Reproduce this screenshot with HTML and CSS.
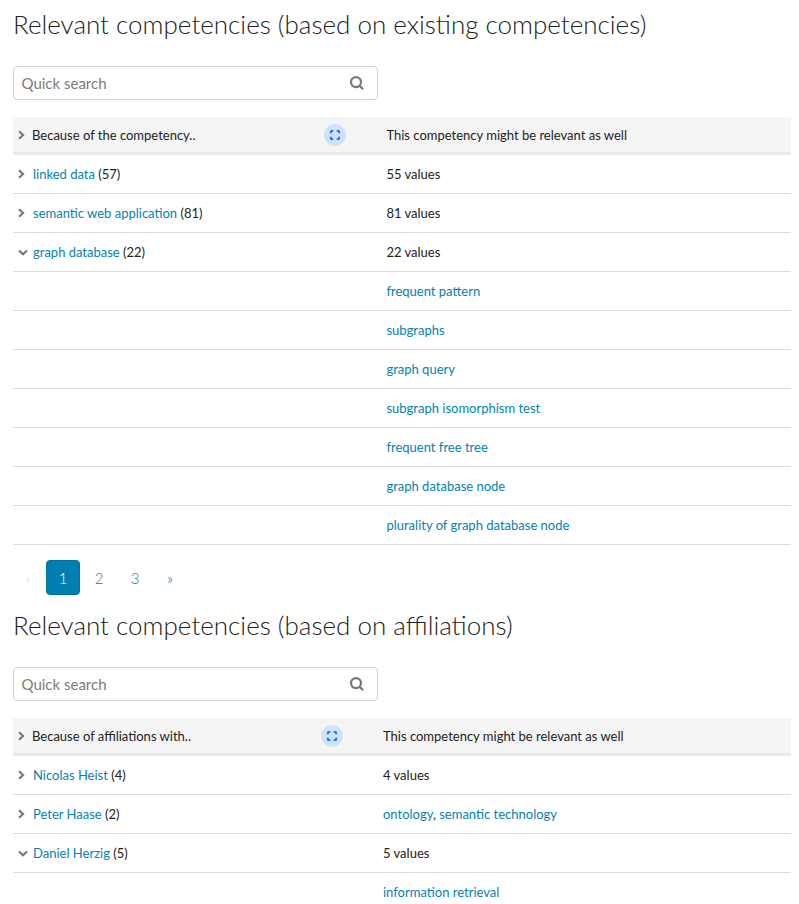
FILE: index.html
```html
<!DOCTYPE html>
<html lang="en">
<head>
<meta charset="utf-8">
<title>Relevant competencies</title>
<link rel="stylesheet" href="styles.css">
</head>
<body>
<svg width="0" height="0" class="defs" aria-hidden="true">
<symbol id="right" viewBox="0 0 10 10"><path d="M3 1.2 7.1 5 3 8.8"/></symbol>
<symbol id="down" viewBox="0 0 10 10"><path d="M1 3.4 5 7.2 9 3.4"/></symbol>
<symbol id="search" viewBox="0 0 16 16"><circle cx="7" cy="7.1" r="5"/><path d="m10.6 10.7 3.5 3.5"/></symbol>
<symbol id="expand" viewBox="0 0 12 12"><path d="M1.8 4.3V2.8q0-1 1-1h1.5M7.7 1.8h1.5q1 0 1 1v1.5M10.2 7.7v1.5q0 1-1 1H7.7M4.3 10.2H2.8q-1 0-1-1V7.7"/></symbol>
</svg>
<section class="block">
<h2>Relevant competencies (based on existing competencies)</h2>
<label class="search"><input type="text" placeholder="Quick search"><svg><use href="#search"/></svg></label>
<div class="table">
<div class="row head"><div class="cell"><svg class="chev"><use href="#right"/></svg><span>Because of the competency..</span><span class="expand"><svg><use href="#expand"/></svg></span></div><div>This competency might be relevant as well</div></div>
<div class="row"><div class="cell"><svg class="chev"><use href="#right"/></svg><span><a>linked data</a> (57)</span></div><div>55 values</div></div>
<div class="row"><div class="cell"><svg class="chev"><use href="#right"/></svg><span><a>semantic web application</a> (81)</span></div><div>81 values</div></div>
<div class="row"><div class="cell"><svg class="chev down"><use href="#down"/></svg><span><a>graph database</a> (22)</span></div><div>22 values</div></div>
<div class="row"><div></div><div><a>frequent pattern</a></div></div>
<div class="row"><div></div><div><a>subgraphs</a></div></div>
<div class="row"><div></div><div><a>graph query</a></div></div>
<div class="row"><div></div><div><a>subgraph isomorphism test</a></div></div>
<div class="row"><div></div><div><a>frequent free tree</a></div></div>
<div class="row"><div></div><div><a>graph database node</a></div></div>
<div class="row"><div></div><div><a>plurality of graph database node</a></div></div>
</div>
<nav class="pages"><span class="prev">«</span><a class="active">1</a><a>2</a><a>3</a><a class="next">»</a></nav>
</section>
<section class="block affiliations">
<h2>Relevant competencies (based on affiliations)</h2>
<label class="search"><input type="text" placeholder="Quick search"><svg><use href="#search"/></svg></label>
<div class="table">
<div class="row head"><div class="cell"><svg class="chev"><use href="#right"/></svg><span>Because of affiliations with..</span><span class="expand"><svg><use href="#expand"/></svg></span></div><div>This competency might be relevant as well</div></div>
<div class="row"><div class="cell"><svg class="chev"><use href="#right"/></svg><span><a>Nicolas Heist</a> (4)</span></div><div>4 values</div></div>
<div class="row"><div class="cell"><svg class="chev"><use href="#right"/></svg><span><a>Peter Haase</a> (2)</span></div><div><a>ontology</a>, <a>semantic technology</a></div></div>
<div class="row"><div class="cell"><svg class="chev down"><use href="#down"/></svg><span><a>Daniel Herzig</a> (5)</span></div><div>5 values</div></div>
<div class="row last"><div></div><div><a>information retrieval</a></div></div>
</div>
</section>
</body>
</html>
```
FILE: styles.css
```css
* { box-sizing: border-box; }
body { margin: 0; padding: 0 8px 0 13px; font: 13px/20px Lato, sans-serif; color: #222; background: #fff; }
.defs { position: absolute; }
svg { fill: none; stroke: #777; }
a { color: #0482b2; text-decoration: none; }
.block { --first: 373.4px; height: 601px; padding-top: 7px; }
.affiliations { --first: 370px; height: auto; }
h2 { margin: 0 0 25px; font-size: 26px; line-height: 34px; font-weight: 300; color: #222; white-space: nowrap; }
.search { display: flex; align-items: center; width: 365px; height: 34px; border: 1px solid #d2d2d2; border-radius: 4px; padding: 0 12px 0 7.5px; margin-bottom: 17px; }
.search input { flex: 1; min-width: 0; border: 0; padding: 0; outline: 0; font: 15px/20px Lato, sans-serif; background: none; }
.search input::placeholder { color: #7c7c7c; opacity: 1; }
.search svg { width: 16px; height: 16px; stroke-width: 2.2; }
.row { display: grid; grid-template-columns: var(--first) 1fr; align-items: center; height: 39px; border-bottom: 1px solid #d9dcde; }
.head { height: 38px; background: #f5f5f5; border-bottom: 0; padding-bottom: 2px; box-shadow: inset 0 -3px #eaeaea; }
.last { height: 31px; border-bottom: 0; align-items: start; padding-top: 9px; }
.cell { display: flex; align-items: center; padding-left: 3px; }
.chev { width: 10px; height: 10px; margin-right: 7px; stroke-width: 2.1; }
.head .chev { margin-right: 6px; }
.chev.down { margin-left: 2px; margin-right: 5px; }
.expand { display: flex; align-items: center; justify-content: center; margin-left: auto; margin-right: 40px; width: 22px; height: 22px; border-radius: 50%; background: #cde3fb; }
.expand svg { width: 12px; height: 12px; stroke: #176bfa; stroke-width: 1.8; }
.pages { display: flex; margin: 15px 0 0 -1px; font-size: 15px; line-height: 36px; font-weight: 300; text-align: center; }
.pages > * { width: 34px; height: 35px; margin-right: 2px; }
.pages .prev { width: 32px; color: #e6e6e6; }
.pages .next { width: 32px; }
.pages .active { color: #fff; background: #0080b0; border: 1px solid #00719f; border-radius: 4px; line-height: 35px; }
```
